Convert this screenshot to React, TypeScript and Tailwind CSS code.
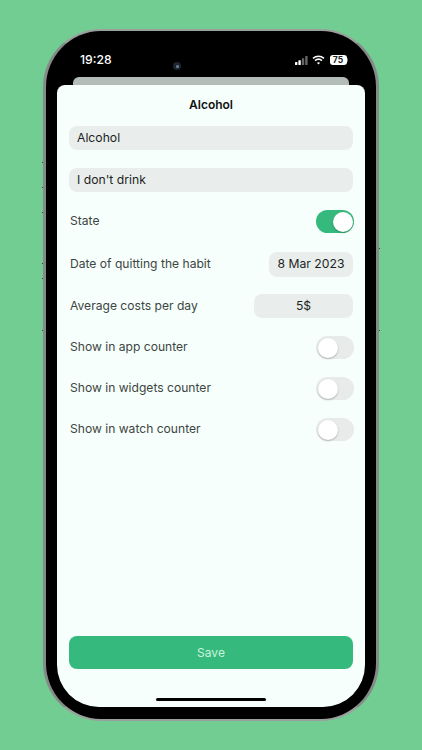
import { ReactNode } from "react"

function Toggle({ on = false }: { on?: boolean }) {
  return (
    <div className={`flex h-[23px] w-[38px] items-center rounded-full p-[1.5px] ${on ? "justify-end bg-[#36b97d]" : "justify-start bg-[#e8ebea]"}`}>
      <div className="h-[20px] w-[20px] rounded-full bg-white shadow-[0_1px_2px_rgba(0,0,0,0.25)]" />
    </div>
  )
}

function Field({ children }: { children: ReactNode }) {
  return <div className="flex h-6 items-center rounded-lg bg-[#e9eeec] px-2 text-[12.2px] text-[#1c1f1e]">{children}</div>
}

function Row({ label, children, className }: { label: string; children: ReactNode; className: string }) {
  return (
    <div className={`flex items-center justify-between pl-px text-[12.1px] text-[#3d4543] ${className}`}>
      <span>{label}</span>
      {children}
    </div>
  )
}

function StatusIcons() {
  return (
    <div className="flex items-center gap-[3px]">
      <svg width="14" height="9" viewBox="0 0 14 9">
        <rect x="0" y="6" width="2.4" height="3" rx="0.6" fill="#fff" />
        <rect x="3.4" y="4.2" width="2.4" height="4.8" rx="0.6" fill="#fff" />
        <rect x="6.8" y="2.2" width="2.4" height="6.8" rx="0.6" fill="#666" />
        <rect x="10.2" y="0" width="2.4" height="9" rx="0.6" fill="#666" />
      </svg>
      <svg width="13" height="10" viewBox="0 0 13 10" fill="none" stroke="#fff" strokeWidth="1.5">
        <path d="M1 3.4C4.2 .6 8.8 .6 12 3.4" />
        <path d="M3 5.6c2-1.7 5-1.7 7 0" />
        <path d="M6.5 9.6 4.9 7.8c1-.8 2.2-.8 3.2 0z" fill="#fff" stroke="none" />
      </svg>
      <div className="ml-[2px] flex items-center">
        <div className="flex h-[10px] w-[17px] items-center justify-center rounded-[3px] bg-white text-[8.5px] font-bold leading-none text-[#222]">75</div>
        <div className="h-[4px] w-[1.5px] rounded-r-sm bg-[#777]" />
      </div>
    </div>
  )
}

export default function App() {
  return (
    <div className="h-[750px] w-[422px] overflow-hidden bg-[#72cd93] pt-[29px] font-['Inter',sans-serif]">
      <div className="relative mx-auto h-[692px] w-[336px] rounded-[58px] border-x-[3px] border-y-[2px] border-x-[#858b87] border-y-[#9aa09c] bg-black px-[11px]">
        {/* antenna marks on the frame */}
        <div className="absolute -left-[4px] top-[131px] h-px w-px bg-[#444]" />
        <div className="absolute -left-[4px] top-[156px] h-px w-px bg-[#444]" />
        <div className="absolute -left-[4px] top-[181px] h-px w-px bg-[#444]" />
        <div className="absolute -left-[4px] top-[232px] h-px w-px bg-[#444]" />
        <div className="absolute -left-[4px] top-[247px] h-px w-px bg-[#444]" />
        <div className="absolute -left-[4px] top-[299px] h-px w-px bg-[#444]" />
        <div className="absolute -right-[4px] top-[217px] h-px w-px bg-[#444]" />
        <div className="absolute -right-[4px] top-[299px] h-px w-px bg-[#444]" />

        <div className="flex items-center justify-between pl-[23px] pr-[17px] pt-[21px]">
          <span className="text-[12.2px] font-medium leading-4 text-white">19:28</span>
          <StatusIcons />
        </div>
        <div className="absolute left-[127px] top-[31px] flex h-2 w-2 items-center justify-center rounded-full bg-[#1c2530]">
          <div className="h-[3px] w-[3px] rounded-full bg-[#6d8296]" />
        </div>

        <div className="mx-[16px] mt-[9px] h-[12px] rounded-t-md bg-[#b4bcb8]" />
        <div className="-mt-1 flex h-[622px] flex-col rounded-b-[42px] rounded-t-lg bg-[#f6fffb] px-3">
          <h1 className="mt-3 text-center text-[12px] font-semibold leading-4 text-[#111]">Alcohol</h1>
          <div className="mt-[13px]"><Field>Alcohol</Field></div>
          <div className="mt-[18px]"><Field>I don't drink</Field></div>

          <Row label="State" className="-mr-px mt-[18px]"><Toggle on /></Row>
          <Row label="Date of quitting the habit" className="mt-[19px]">
            <div className="flex h-[25px] w-[84px] items-center justify-center rounded-lg bg-[#e9eeec] text-[12.2px] text-[#1c1f1e]">8 Mar 2023</div>
          </Row>
          <Row label="Average costs per day" className="mt-[17px]">
            <div className="flex h-6 w-[99px] items-center justify-center rounded-lg bg-[#e9eeec] text-[12.2px] text-[#1c1f1e]">5$</div>
          </Row>
          <Row label="Show in app counter" className="-mr-px mt-[18px]"><Toggle /></Row>
          <Row label="Show in widgets counter" className="-mr-px mt-[18px]"><Toggle /></Row>
          <Row label="Show in watch counter" className="-mr-px mt-[18px]"><Toggle /></Row>

          <button className="mt-auto h-[33px] rounded-lg bg-[#36b97d] text-[12px] text-[#c9f3dc]">Save</button>
          <div className="mx-auto mb-[6px] mt-[29px] h-[3px] w-[110px] rounded-full bg-black" />
        </div>
      </div>
    </div>
  )
}
